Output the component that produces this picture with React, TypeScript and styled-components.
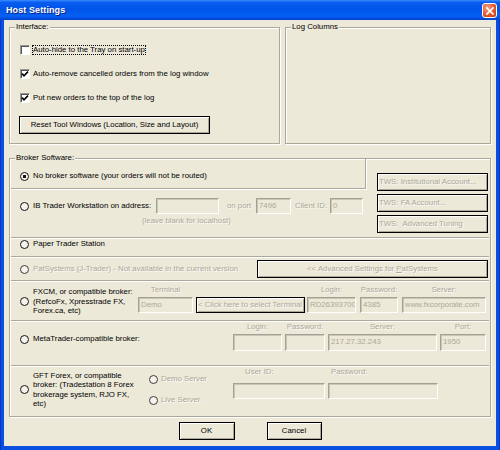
import React from 'react';
import styled, { createGlobalStyle, css } from 'styled-components';

const Global = createGlobalStyle`
  html, body { margin: 0; padding: 0; background: #ffffff; }
  body { font-family: 'Liberation Sans', Arial, sans-serif; font-size: 7.8px; color: #000; }
  *, *::before, *::after { box-sizing: border-box; }
`;

const FONT = css`
  font-family: 'Liberation Sans', Arial, sans-serif;
  font-size: 7.8px;
`;

const Window = styled.div`
  width: 500px;
  height: 450px;
  display: flex;
  flex-direction: column;
  background: #0b4fe0;
`;

const TitleBar = styled.div`
  height: 20px;
  flex: none;
  display: flex;
  align-items: center;
  justify-content: space-between;
  padding: 0 3px 0 6px;
  background: linear-gradient(
    to bottom,
    #3a8cff 0%,
    #0a5cf0 12%,
    #0054e8 45%,
    #0560f4 80%,
    #0050e0 92%,
    #003dc8 100%
  );
`;

const Title = styled.span`
  font-family: 'Liberation Sans', Arial, sans-serif;
  font-weight: bold;
  font-size: 9px;
  color: #ffffff;
  text-shadow: 1px 1px 0 #0a2080;
  letter-spacing: 0.1px;
`;

const CloseButton = styled.div`
  width: 15px;
  height: 15px;
  margin-top: 1px;
  border: 1px solid #ffffff;
  border-radius: 3px;
  background: radial-gradient(circle at 35% 30%, #f3a284 0%, #e0582e 55%, #c23d14 100%);
  display: flex;
  align-items: center;
  justify-content: center;
`;

const Frame = styled.div`
  flex: 1;
  display: flex;
  padding: 0 3px 4px;
  background: #0b4fe0;
  border-left: 1px solid #0835c8;
  border-right: 1px solid #0835c8;
  border-bottom: 1px solid #0835c8;
`;

const Body = styled.div`
  flex: 1;
  background: #ece9d8;
  display: flex;
  flex-direction: column;
  padding: 7px 5px 6px 5px;
`;

const TopRow = styled.div`
  display: flex;
  gap: 5px;
  height: 117px;
`;

const Group = styled.div<{ $w: number; $h: number }>`
  position: relative;
  width: ${p => p.$w}px;
  height: ${p => p.$h}px;
  flex: none;
  border: 1px solid #aca899;
  box-shadow: inset 1px 1px 0 #ffffff, 1px 1px 0 #ffffff;
  display: flex;
  flex-direction: column;
`;

const Caption = styled.span`
  position: absolute;
  top: -6px;
  left: 5px;
  padding: 0 1px;
  line-height: 10px;
  background: #ece9d8;
  white-space: nowrap;
`;

const InterfaceBody = styled.div`
  display: flex;
  flex-direction: column;
  gap: 12px;
  padding: 16px 0 0 10px;
`;

const CheckRow = styled.div`
  display: flex;
  align-items: center;
  gap: 2px;
  height: 12px;
`;

const CheckBox = styled.span`
  width: 10px;
  height: 10px;
  flex: none;
  background: #ffffff;
  border: 1px solid;
  border-color: #9a988c #ffffff #ffffff #9a988c;
  box-shadow: inset 1px 1px 0 #555;
  display: flex;
  align-items: center;
  justify-content: center;
`;

const CheckText = styled.span<{ $focus?: boolean }>`
  padding: 0 1px;
  line-height: 10px;
  white-space: nowrap;
  ${p => p.$focus && css`outline: 1px dotted #000; outline-offset: -1px;`}
`;

const Button = styled.button<{ $w: number; $h?: number; $dim?: boolean; $left?: boolean }>`
  ${FONT};
  width: ${p => p.$w}px;
  height: ${p => p.$h ?? 18}px;
  flex: none;
  margin: 0;
  padding: 0 ${p => (p.$left ? '1px' : '3px')};
  background: #ece9d8;
  color: ${p => (p.$dim ? '#aca899' : '#000')};
  ${p => p.$dim && css`text-shadow: 1px 1px 0 rgba(255, 255, 255, 0.8);`}
  border: 1px solid #000;
  border-radius: 0;
  box-shadow: inset 1px 1px 0 #ffffff, inset -1px -1px 0 #aca899;
  text-align: ${p => (p.$left ? 'left' : 'center')};
  white-space: nowrap;
  overflow: hidden;
  line-height: 14px;
  cursor: default;
`;

const ResetButton = styled(Button)`
  margin-left: -1px;
`;

const BrokerBody = styled.div`
  display: flex;
  flex-direction: column;
  padding: 0 1px;
  flex: 1;
`;

const TopBlock = styled.div`
  display: grid;
  grid-template-columns: 355px 1fr;
  height: 79px;
  border-bottom: 1px solid #aca899;
  box-shadow: 0 1px 0 #ffffff;
`;

const LeftCol = styled.div`
  display: flex;
  flex-direction: column;
`;

const FirstRow = styled.div`
  height: 30px;
  display: flex;
  align-items: center;
  padding: 5px 0 0 9px;
  border-right: 1px solid #aca899;
  border-bottom: 1px solid #aca899;
  box-shadow: 1px 1px 0 #ffffff;
`;

const IBRow = styled.div`
  display: flex;
  flex-direction: column;
  padding: 9px 0 0 9px;
`;

const Line = styled.div`
  display: flex;
  align-items: center;
  height: 16px;
`;

const Hint = styled.div`
  margin: 2px 0 0 122px;
  line-height: 10px;
  color: #aca899;
  text-shadow: 1px 1px 0 rgba(255, 255, 255, 0.8);
  white-space: nowrap;
`;

const RightCol = styled.div`
  display: flex;
  flex-direction: column;
  gap: 3px;
  padding: 14px 0 0 11px;
`;

const Row = styled.div<{ $h: number; $center?: boolean; $pt?: number; $pb?: number; $last?: boolean }>`
  height: ${p => p.$h}px;
  flex: none;
  display: flex;
  align-items: ${p => (p.$center ? 'center' : 'flex-start')};
  padding: ${p => p.$pt ?? 0}px 0 ${p => p.$pb ?? 0}px 9px;
  ${p =>
    !p.$last &&
    css`
      border-bottom: 1px solid #aca899;
      box-shadow: 0 1px 0 #ffffff;
    `}
`;

const Lead = styled.div<{ $w: number; $mt?: number }>`
  width: ${p => p.$w}px;
  flex: none;
  display: flex;
  align-items: center;
  gap: 4px;
  margin-top: ${p => p.$mt ?? 0}px;
`;

const Radio = styled.span<{ $checked?: boolean; $dim?: boolean }>`
  width: 9px;
  height: 9px;
  flex: none;
  border-radius: 50%;
  border: 1.6px solid ${p => (p.$dim ? '#3a3a3a' : '#141414')};
  background: ${p =>
    p.$checked
      ? 'radial-gradient(circle, #111 0 1.4px, #f4f3ee 1.9px)'
      : '#f4f3ee'};
`;

const OptText = styled.span<{ $dim?: boolean; $lh?: number }>`
  line-height: ${p => p.$lh ?? 10}px;
  white-space: nowrap;
  color: ${p => (p.$dim ? '#aca899' : '#000')};
  ${p => p.$dim && css`text-shadow: 1px 1px 0 rgba(255, 255, 255, 0.8);`}
`;

const Label = styled.span<{ $w: number; $ml?: number }>`
  width: ${p => p.$w}px;
  margin-left: ${p => p.$ml ?? 0}px;
  flex: none;
  color: #aca899;
  text-shadow: 1px 1px 0 rgba(255, 255, 255, 0.8);
  white-space: nowrap;
  line-height: 10px;
`;

const TextBox = styled.div<{ $w: number; $h?: number; $ml?: number }>`
  width: ${p => p.$w}px;
  height: ${p => p.$h ?? 16}px;
  margin-left: ${p => p.$ml ?? 0}px;
  flex: none;
  background: #ece9d8;
  border: 1px solid;
  border-color: #a3a195 #ffffff #ffffff #a3a195;
  box-shadow: inset 1px 1px 0 #c9c6b6;
  color: #aca899;
  padding-left: 2px;
  line-height: ${p => (p.$h ?? 16) - 3}px;
  white-space: nowrap;
  overflow: hidden;
`;

const Field = styled.div<{ $ml?: number; $gap?: number }>`
  display: flex;
  flex-direction: column;
  gap: ${p => p.$gap ?? 2}px;
  margin-left: ${p => p.$ml ?? 0}px;
  flex: none;
`;

const FieldLabel = styled.span<{ $pl?: number; $left?: boolean }>`
  line-height: 10px;
  height: 10px;
  color: #aca899;
  text-shadow: 1px 1px 0 rgba(255, 255, 255, 0.8);
  white-space: nowrap;
  text-align: ${p => (p.$left ? 'left' : 'center')};
  padding-left: ${p => p.$pl ?? 0}px;
`;

const SubRadios = styled.div`
  width: 84px;
  flex: none;
  display: flex;
  flex-direction: column;
  gap: 11px;
  padding-top: 7px;
`;

const SubOption = styled.div`
  display: flex;
  align-items: center;
  gap: 3px;
  height: 10px;
`;

const Underline = styled.span`
  text-decoration: underline;
`;

const Footer = styled.div`
  display: flex;
  justify-content: center;
  gap: 32px;
  margin-top: 5px;
`;

const CheckMark = () => (
  <svg width="8" height="8" viewBox="0 0 8 8">
    <polyline points="1,3.6 3,5.8 7,1.6" fill="none" stroke="#000" strokeWidth="1.6" />
  </svg>
);

const CloseX = () => (
  <svg width="8" height="8" viewBox="0 0 8 8">
    <path d="M1 1 L7 7 M7 1 L1 7" stroke="#fff" strokeWidth="1.7" strokeLinecap="square" />
  </svg>
);

export default function App() {
  return (
    <>
      <Global />
      <Window>
        <TitleBar>
          <Title>Host Settings</Title>
          <CloseButton>
            <CloseX />
          </CloseButton>
        </TitleBar>
        <Frame>
          <Body>
            <TopRow>
              <Group $w={271} $h={117}>
                <Caption>Interface:</Caption>
                <InterfaceBody>
                  <CheckRow>
                    <CheckBox />
                    <CheckText $focus>Auto-hide to the Tray on start-up</CheckText>
                  </CheckRow>
                  <CheckRow>
                    <CheckBox>
                      <CheckMark />
                    </CheckBox>
                    <CheckText>Auto-remove cancelled orders from the log window</CheckText>
                  </CheckRow>
                  <CheckRow>
                    <CheckBox>
                      <CheckMark />
                    </CheckBox>
                    <CheckText>Put new orders to the top of the log</CheckText>
                  </CheckRow>
                  <ResetButton $w={191}>Reset Tool Windows (Location, Size and Layout)</ResetButton>
                </InterfaceBody>
              </Group>
              <Group $w={206} $h={117}>
                <Caption>Log Columns</Caption>
              </Group>
            </TopRow>

            <Group $w={482} $h={259} style={{ marginTop: 14 }}>
              <Caption>Broker Software:</Caption>
              <BrokerBody>
                <TopBlock>
                  <LeftCol>
                    <FirstRow>
                      <Lead $w={300}>
                        <Radio $checked />
                        <OptText>No broker software (your orders will not be routed)</OptText>
                      </Lead>
                    </FirstRow>
                    <IBRow>
                      <Line>
                        <Lead $w={136}>
                          <Radio />
                          <OptText>IB Trader Workstation on address:</OptText>
                        </Lead>
                        <TextBox $w={63} />
                        <Label $w={29} $ml={8}>on port</Label>
                        <TextBox $w={35}>7496</TextBox>
                        <Label $w={35} $ml={4}>Client ID:</Label>
                        <TextBox $w={33}>0</TextBox>
                      </Line>
                      <Hint>(leave blank for localhost)</Hint>
                    </IBRow>
                  </LeftCol>
                  <RightCol>
                    <Button $w={111} $dim $left>TWS: Institutional Account...</Button>
                    <Button $w={111} $dim $left>TWS: FA Account...</Button>
                    <Button $w={111} $dim $left>TWS:&nbsp; Advanced Tuning</Button>
                  </RightCol>
                </TopBlock>

                <Row $h={19} $center $pb={6}>
                  <Lead $w={200}>
                    <Radio />
                    <OptText>Paper Trader Station</OptText>
                  </Lead>
                </Row>

                <Row $h={24} $center $pt={1}>
                  <Lead $w={237}>
                    <Radio $dim />
                    <OptText $dim>PatSystems (J-Trader) - Not available in the current version</OptText>
                  </Lead>
                  <Button $w={231} $dim>
                    &lt;&lt; Advanced Settings for <Underline>P</Underline>atSystems
                  </Button>
                </Row>

                <Row $h={40} $pt={4}>
                  <Lead $w={118} $mt={2}>
                    <Radio />
                    <OptText $lh={9.7}>
                      FXCM, or compatible broker:
                      <br />
                      (RefcoFx, Xpresstrade FX,
                      <br />
                      Forex.ca, etc)
                    </OptText>
                  </Lead>
                  <Field>
                    <FieldLabel>Terminal</FieldLabel>
                    <TextBox $w={55}>Demo</TextBox>
                  </Field>
                  <Field $ml={3}>
                    <FieldLabel>&nbsp;</FieldLabel>
                    <Button $w={109} $h={16} $dim $left>
                      &lt; Click here to select Terminal
                    </Button>
                  </Field>
                  <Field $ml={2}>
                    <FieldLabel>Login:</FieldLabel>
                    <TextBox $w={49}>RD26393700</TextBox>
                  </Field>
                  <Field $ml={4}>
                    <FieldLabel>Password:</FieldLabel>
                    <TextBox $w={38}>4385</TextBox>
                  </Field>
                  <Field $ml={4}>
                    <FieldLabel>Server:</FieldLabel>
                    <TextBox $w={84}>www.fxcorporate.com</TextBox>
                  </Field>
                </Row>

                <Row $h={45} $pt={1}>
                  <Lead $w={213} $mt={12}>
                    <Radio />
                    <OptText>MetaTrader-compatible broker:</OptText>
                  </Lead>
                  <Field>
                    <FieldLabel>Login:</FieldLabel>
                    <TextBox $w={49} $h={17} />
                  </Field>
                  <Field $ml={3}>
                    <FieldLabel>Password:</FieldLabel>
                    <TextBox $w={40} $h={17} />
                  </Field>
                  <Field $ml={3}>
                    <FieldLabel>Server:</FieldLabel>
                    <TextBox $w={109} $h={17}>217.27.32.243</TextBox>
                  </Field>
                  <Field $ml={3}>
                    <FieldLabel>Port:</FieldLabel>
                    <TextBox $w={46} $h={17}>1950</TextBox>
                  </Field>
                </Row>

                <Row $h={49} $pt={1} $last>
                  <Lead $w={129} $mt={4}>
                    <Radio />
                    <OptText $lh={9.3}>
                      GFT Forex, or compatible
                      <br />
                      broker: (Tradestation 8 Forex
                      <br />
                      brokerage system, RJO FX,
                      <br />
                      etc)
                    </OptText>
                  </Lead>
                  <SubRadios>
                    <SubOption>
                      <Radio $dim />
                      <OptText $dim>Demo Server</OptText>
                    </SubOption>
                    <SubOption>
                      <Radio $dim />
                      <OptText $dim>Live Server</OptText>
                    </SubOption>
                  </SubRadios>
                  <Field $gap={6}>
                    <FieldLabel $left $pl={12}>User ID:</FieldLabel>
                    <TextBox $w={92} />
                  </Field>
                  <Field $ml={3} $gap={6}>
                    <FieldLabel $left $pl={3}>Password:</FieldLabel>
                    <TextBox $w={110} />
                  </Field>
                </Row>
              </BrokerBody>
            </Group>

            <Footer>
              <Button $w={56}>OK</Button>
              <Button $w={55}>Cancel</Button>
            </Footer>
          </Body>
        </Frame>
      </Window>
    </>
  );
}
